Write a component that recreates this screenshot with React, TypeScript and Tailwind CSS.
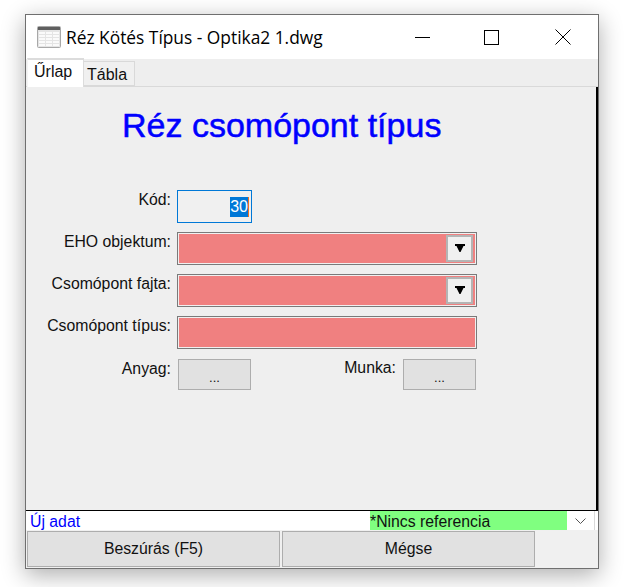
import React from "react";

const sans = "font-['Liberation_Sans',sans-serif]";

function Arrow() {
  return (
    <div className="w-[27px] h-[27px] bg-[#f0f0f0] border-2 border-[#b4b4b4] flex items-center justify-center">
      <svg width="10" height="9" viewBox="0 0 10 9" fill="#000">
        <path d="M0 0H10V2H8.500L5.500 8H4.500L1.500 2H0Z" />
      </svg>
    </div>
  );
}

function Label({ children }: { children: React.ReactNode }) {
  return <div className="w-[145px] text-right text-[#111] text-[15.800px] leading-[18px] pt-[1px] mr-[6px] whitespace-nowrap">{children}</div>;
}

function Red({ arrow }: { arrow?: boolean }) {
  return (
    <div className="w-[300px] h-[33px] border border-[#7a7a7a] p-[1px] bg-[#f0f0f0]">
      <div className="w-full h-full bg-[#f08080] flex items-center justify-end pr-[2px]">{arrow && <Arrow />}</div>
    </div>
  );
}

function Dots() {
  return (
    <div className="w-[73px] h-[31px] bg-[#e1e1e1] border border-[#adadad] flex items-center justify-center text-[13px] text-[#111] pt-[6px]">
      ...
    </div>
  );
}

export default function App() {
  return (
    <div className={`w-[627px] h-[587px] bg-white pt-[14px] pl-[25px] overflow-hidden ${sans}`}>
      <div className="w-[574px] h-[555px] border border-[#6f6f6f] bg-[#f0f0f0] flex flex-col shadow-[0_6px_22px_rgba(0,0,0,0.32)]">
        <div className="h-[44px] bg-white flex items-center shrink-0">
          <svg className="ml-[11px]" width="24" height="22" viewBox="0 0 24 22">
            <rect x="0.500" y="0.500" width="23" height="21" rx="1" fill="#e4e4e4" stroke="#a8a8a8" />
            <rect x="1" y="1" width="22" height="3" fill="#5f5f5f" />
            {[2, 9, 16].map((x) =>
              [6, 9, 12, 15, 18].map((y) => <rect key={`${x}-${y}`} x={x} y={y} width="6" height="2" fill="#fafafa" />)
            )}
          </svg>
          <div className="ml-[5px] text-[17.350px] text-black font-['Open_Sans',sans-serif] w-[349px] whitespace-nowrap">
            Réz Kötés Típus - Optika2 1.dwg
          </div>
          <div className="flex items-center">
            <div className="w-[15px] h-[1px] bg-black" />
            <div className="w-[15px] h-[15px] border border-black ml-[54px]" />
            <svg className="ml-[56px]" width="16" height="16" viewBox="0 0 16 16" stroke="#000" fill="none">
              <path d="M0.500 0.500L15.500 15.500M15.500 0.500L0.500 15.500" />
            </svg>
          </div>
        </div>
        <div className="h-[28px] bg-[#eeeeee] flex items-end shrink-0 border-b border-[#d9d9d9]">
          <div className="ml-[1px] w-[57px] h-[29px] -mb-[1px] bg-white border-t-2 border-x border-[#dcdcdc] text-[16px] leading-[24px] text-[#111] pl-[6px] border-l-[#f4f4f4]">
            Űrlap
          </div>
          <div className="w-[51px] h-[25px] bg-[#f0f0f0] border border-l-0 border-[#d9d9d9] text-[16px] leading-[26px] text-[#111] pl-[3px]">
            Tábla
          </div>
        </div>
        <div className="flex-1 bg-[#efefef] border-r-2 border-r-black border-b border-b-black flex flex-col min-h-0">
          <div className="text-[34px] leading-[39px] text-[#0000ff] mt-[19px] ml-[96px] font-medium [-webkit-text-stroke:0.5px_#0000ff] whitespace-nowrap">
            Réz csomópont típus
          </div>
          <div className="mt-[45px] flex flex-col gap-[9px]">
            <div className="flex">
              <Label>Kód:</Label>
              <div className="w-[75px] h-[33px] border border-[#0078d7] flex items-center justify-end pr-[2px] bg-[#f0f0f0]">
                <span className="bg-[#0078d7] text-white text-[16px] leading-[20px] border-r border-r-[#f07020]">30</span>
              </div>
            </div>
            <div className="flex">
              <Label>EHO objektum:</Label>
              <Red arrow />
            </div>
            <div className="flex">
              <Label>Csomópont fajta:</Label>
              <Red arrow />
            </div>
            <div className="flex">
              <Label>Csomópont típus:</Label>
              <Red />
            </div>
            <div className="flex mt-[1px]">
              <Label>Anyag:</Label>
              <div className="ml-[1px]"><Dots /></div>
              <div className="w-[145px] text-right text-[#111] text-[15.800px] leading-[18px] mr-[7px]">Munka:</div>
              <Dots />
            </div>
          </div>
        </div>
        <div className="h-[19px] bg-white flex items-stretch shrink-0 text-[15.800px] leading-[21px]">
          <div className="w-[344px] pl-[4px] text-[#0000ff]">Új adat</div>
          <div className="w-[197px] bg-[#80ff80] text-[#111] whitespace-nowrap">*Nincs referencia</div>
          <div className="w-[28px] flex items-center justify-center border-r border-[#d9d9d9]">
            <svg width="11" height="6" viewBox="0 0 11 6" fill="none" stroke="#555">
              <path d="M0.500 0.500L5.500 5.500L10.500 0.500" />
            </svg>
          </div>
        </div>
        <div className="flex-1 max-h-[38px] flex gap-[2px] pl-[1px] pb-[1px] border-t border-t-[#f0f0f0]">
          <div className="w-[253px] bg-[#e1e1e1] border border-[#adadad] flex items-center justify-center text-[15.800px] text-[#111]">
            Beszúrás (F5)
          </div>
          <div className="w-[253px] bg-[#e1e1e1] border border-[#adadad] flex items-center justify-center text-[15.800px] text-[#111]">
            Mégse
          </div>
        </div>
      </div>
    </div>
  );
}
